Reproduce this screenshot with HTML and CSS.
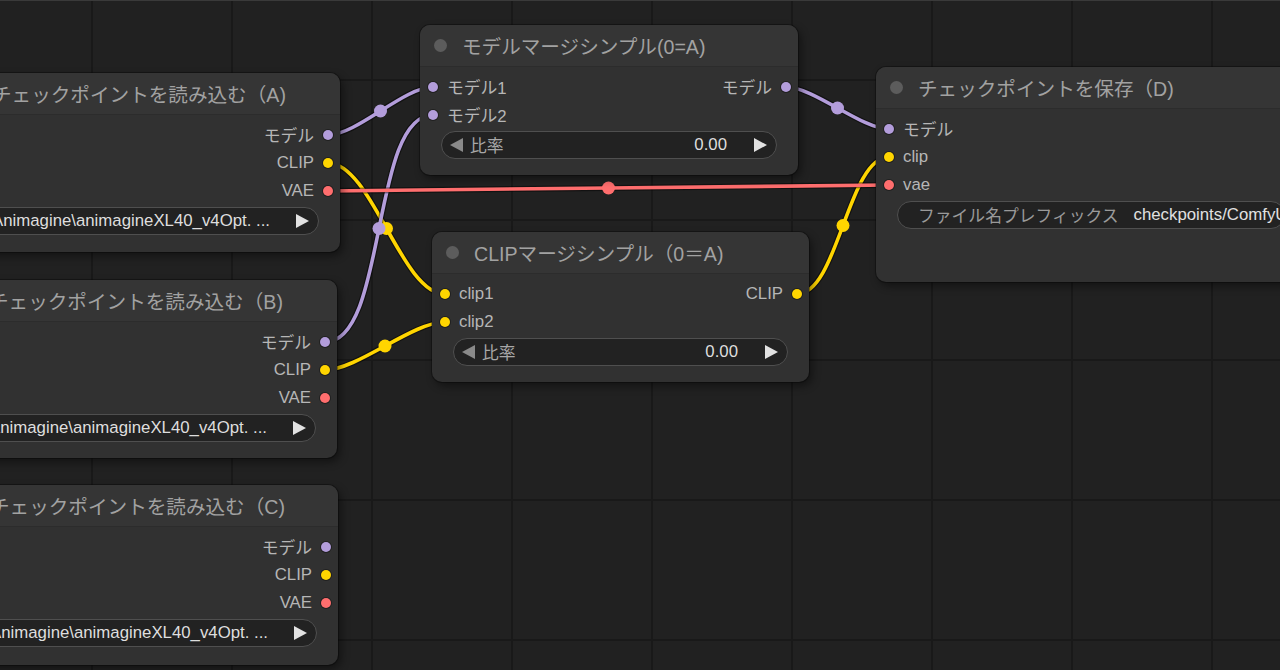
FILE: index.html
```html
<!DOCTYPE html>
<html lang="ja">
<head>
<meta charset="utf-8">
<title>ComfyUI</title>
<link rel="stylesheet" href="styles.css">
</head>
<body>
<div class="canvas">
  <svg class="links" width="1280" height="670" viewBox="0 0 1280 670">
    <g class="link clip">
      <path class="edge" d="M328,163 C371.9,163 401.1,294 445,294"/>
      <path class="core" d="M328,163 C371.9,163 401.1,294 445,294"/>
      <path class="edge" d="M325,370 C357.3,370 412.7,322 445,322"/>
      <path class="core" d="M325,370 C357.3,370 412.7,322 445,322"/>
      <path class="edge" d="M797,294 C838.3,294 847.7,157 889,157"/>
      <path class="core" d="M797,294 C838.3,294 847.7,157 889,157"/>
      <circle cx="386.5" cy="228.5" r="6.5"/>
      <circle cx="385" cy="346" r="6.5"/>
      <circle cx="843" cy="225.5" r="6.5"/>
    </g>
    <g class="link model">
      <path class="edge" d="M328,135 C356.9,135 404.1,87 433,87"/>
      <path class="core" d="M328,135 C356.9,135 404.1,87 433,87"/>
      <path class="edge" d="M325,342 C387.8,342 370.2,115 433,115"/>
      <path class="core" d="M325,342 C387.8,342 370.2,115 433,115"/>
      <path class="edge" d="M786,87 C813.8,87 861.2,129 889,129"/>
      <path class="core" d="M786,87 C813.8,87 861.2,129 889,129"/>
      <circle cx="380.5" cy="111" r="6.5"/>
      <circle cx="379" cy="228.5" r="6.5"/>
      <circle cx="837.5" cy="108" r="6.5"/>
    </g>
    <g class="link vae">
      <path class="edge" d="M328,191 C468.3,191 748.7,185 889,185"/>
      <path class="core" d="M328,191 C468.3,191 748.7,185 889,185"/>
      <circle cx="608.5" cy="188" r="6.5"/>
    </g>
  </svg>

  <div class="node node-a">
    <div class="node-title"><span class="title-dot"></span><span>チェックポイントを読み込む（A)</span></div>
    <div class="node-body">
      <div class="slot-row"><div class="slot out"><span>モデル</span><span class="dot model"></span></div></div>
      <div class="slot-row"><div class="slot out"><span>CLIP</span><span class="dot clip"></span></div></div>
      <div class="slot-row"><div class="slot out"><span>VAE</span><span class="dot vae"></span></div></div>
      <div class="widget">
        <span class="arrow-l"></span>
        <span class="w-clip"><span class="w-text">SDXL\Animagine\animagineXL40_v4Opt. ...</span></span>
        <span class="arrow-r"></span>
      </div>
    </div>
  </div>

  <div class="node node-b">
    <div class="node-title"><span class="title-dot"></span><span>チェックポイントを読み込む（B)</span></div>
    <div class="node-body">
      <div class="slot-row"><div class="slot out"><span>モデル</span><span class="dot model"></span></div></div>
      <div class="slot-row"><div class="slot out"><span>CLIP</span><span class="dot clip"></span></div></div>
      <div class="slot-row"><div class="slot out"><span>VAE</span><span class="dot vae"></span></div></div>
      <div class="widget">
        <span class="arrow-l"></span>
        <span class="w-clip"><span class="w-text">SDXL\Animagine\animagineXL40_v4Opt. ...</span></span>
        <span class="arrow-r"></span>
      </div>
    </div>
  </div>

  <div class="node node-c">
    <div class="node-title"><span class="title-dot"></span><span>チェックポイントを読み込む（C)</span></div>
    <div class="node-body">
      <div class="slot-row"><div class="slot out"><span>モデル</span><span class="dot model"></span></div></div>
      <div class="slot-row"><div class="slot out"><span>CLIP</span><span class="dot clip"></span></div></div>
      <div class="slot-row"><div class="slot out"><span>VAE</span><span class="dot vae"></span></div></div>
      <div class="widget">
        <span class="arrow-l"></span>
        <span class="w-clip"><span class="w-text">SDXL\Animagine\animagineXL40_v4Opt. ...</span></span>
        <span class="arrow-r"></span>
      </div>
    </div>
  </div>

  <div class="node node-m">
    <div class="node-title"><span class="title-dot"></span><span>モデルマージシンプル(0=A)</span></div>
    <div class="node-body">
      <div class="slot-row">
        <div class="slot in"><span class="dot model"></span><span>モデル1</span></div>
        <div class="slot out"><span>モデル</span><span class="dot model"></span></div>
      </div>
      <div class="slot-row">
        <div class="slot in"><span class="dot model"></span><span>モデル2</span></div>
      </div>
      <div class="widget">
        <span class="arrow-l dim"></span>
        <span class="w-label">比率</span>
        <span class="w-value">0.00</span>
        <span class="arrow-r"></span>
      </div>
    </div>
  </div>

  <div class="node node-clip">
    <div class="node-title"><span class="title-dot"></span><span>CLIPマージシンプル（0＝A)</span></div>
    <div class="node-body">
      <div class="slot-row">
        <div class="slot in"><span class="dot clip"></span><span>clip1</span></div>
        <div class="slot out"><span>CLIP</span><span class="dot clip"></span></div>
      </div>
      <div class="slot-row">
        <div class="slot in"><span class="dot clip"></span><span>clip2</span></div>
      </div>
      <div class="widget">
        <span class="arrow-l dim"></span>
        <span class="w-label">比率</span>
        <span class="w-value">0.00</span>
        <span class="arrow-r"></span>
      </div>
    </div>
  </div>

  <div class="node node-d">
    <div class="node-title"><span class="title-dot"></span><span>チェックポイントを保存（D)</span></div>
    <div class="node-body">
      <div class="slot-row"><div class="slot in"><span class="dot model"></span><span>モデル</span></div></div>
      <div class="slot-row"><div class="slot in"><span class="dot clip"></span><span>clip</span></div></div>
      <div class="slot-row"><div class="slot in"><span class="dot vae"></span><span>vae</span></div></div>
      <div class="widget text-widget">
        <span class="w-label">ファイル名プレフィックス</span>
        <span class="w-text-value">checkpoints/ComfyUI</span>
      </div>
    </div>
  </div>
</div>
</body>
</html>
```

FILE: styles.css
```css
html, body {
  margin: 0;
  padding: 0;
}

body {
  width: 1280px;
  height: 670px;
  overflow: hidden;
  background: #202020;
  font-family: "Liberation Sans", "Noto Sans CJK JP", sans-serif;
}

.canvas {
  position: relative;
  width: 1280px;
  height: 670px;
  overflow: hidden;
  background-color: #212121;
  background-image:
    linear-gradient(to right, #191919 2px, transparent 2px),
    linear-gradient(to bottom, #191919 2px, transparent 2px);
  background-size: 140px 140px;
  background-position: 91px 79px;
  box-shadow: inset 0 1px 0 #3a3a3a;
}

.links {
  position: absolute;
  left: 0;
  top: 0;
}

.link path {
  fill: none;
  stroke-linecap: round;
}

.link .edge {
  stroke: rgba(0, 0, 0, 0.45);
  stroke-width: 6;
}

.link .core {
  stroke-width: 3.6;
}

.link.clip .core { stroke: #ffd500; }
.link.clip circle { fill: #ffd500; }
.link.model .core { stroke: #b39ddb; }
.link.model circle { fill: #b39ddb; }
.link.vae .core { stroke: #ff6e6e; }
.link.vae circle { fill: #ff6e6e; }

.node {
  position: absolute;
  display: flex;
  flex-direction: column;
  background: #313131;
  border-radius: 10px;
  box-shadow: 0 0 0 1px rgba(0, 0, 0, 0.3), 3px 4px 8px rgba(0, 0, 0, 0.45);
}

.node-a { left: -50px; top: 73px; width: 390px; height: 179px; }
.node-b { left: -53px; top: 280px; width: 390px; height: 178px; }
.node-c { left: -52px; top: 485px; width: 390px; height: 180px; }
.node-m { left: 420px; top: 25px; width: 378px; height: 150px; }
.node-clip { left: 432px; top: 232px; width: 377px; height: 150px; }
.node-d { left: 876px; top: 67px; width: 430px; height: 215px; }

.node-title {
  flex: none;
  height: 42px;
  box-sizing: border-box;
  display: flex;
  align-items: center;
  padding-left: 14px;
  background: #353535;
  border-radius: 10px 10px 0 0;
  border-bottom: 1px solid #2c2c2c;
  font-size: 19.6px;
  color: #a2a2a2;
  white-space: nowrap;
}

.title-dot {
  flex: none;
  width: 13px;
  height: 13px;
  border-radius: 50%;
  background: #5c5c5c;
  margin-right: 15px;
}

.node-body {
  padding-top: 6px;
}

.slot-row {
  height: 28px;
  display: flex;
  align-items: center;
  font-size: 16.8px;
  color: #b6b6b6;
  white-space: nowrap;
}

.slot {
  display: flex;
  align-items: center;
  gap: 9px;
}

.slot.in {
  padding-left: 8px;
}

.slot.out {
  margin-left: auto;
  padding-right: 7px;
}

.dot {
  flex: none;
  width: 10px;
  height: 10px;
  border-radius: 50%;
  box-shadow: 0 0 0 1px rgba(0, 0, 0, 0.35);
}

.dot.model { background: #b39ddb; }
.dot.clip { background: #ffd500; }
.dot.vae { background: #ff6e6e; }

.widget {
  height: 28px;
  margin: 2px 21px 0;
  box-sizing: border-box;
  border: 1px solid #4f4f4f;
  border-radius: 14px;
  background: #222222;
  display: flex;
  align-items: center;
  padding: 0 9px 0 8px;
  font-size: 16.8px;
  white-space: nowrap;
  overflow: hidden;
}

.arrow-l,
.arrow-r {
  flex: none;
  width: 13px;
  height: 14px;
}

.arrow-l {
  clip-path: polygon(100% 0, 0 50%, 100% 100%);
  background: #d8d8d8;
}

.arrow-l.dim {
  background: #8a8a8a;
}

.arrow-r {
  clip-path: polygon(0 0, 100% 50%, 0 100%);
  background: #e2e2e2;
}

.w-label {
  margin-left: 7px;
  color: #a8a8a8;
}

.w-value {
  margin-left: auto;
  margin-right: 27px;
  color: #dedede;
}

.w-clip {
  flex: 1;
  min-width: 0;
  display: flex;
  justify-content: flex-end;
  overflow: hidden;
  margin-right: 26px;
}

.w-text {
  flex: none;
  color: #dedede;
}

.text-widget {
  padding-left: 20px;
}

.text-widget .w-label {
  margin-left: 0;
  color: #9a9a9a;
}

.w-text-value {
  margin-left: 15px;
  color: #e0e0e0;
}
```
